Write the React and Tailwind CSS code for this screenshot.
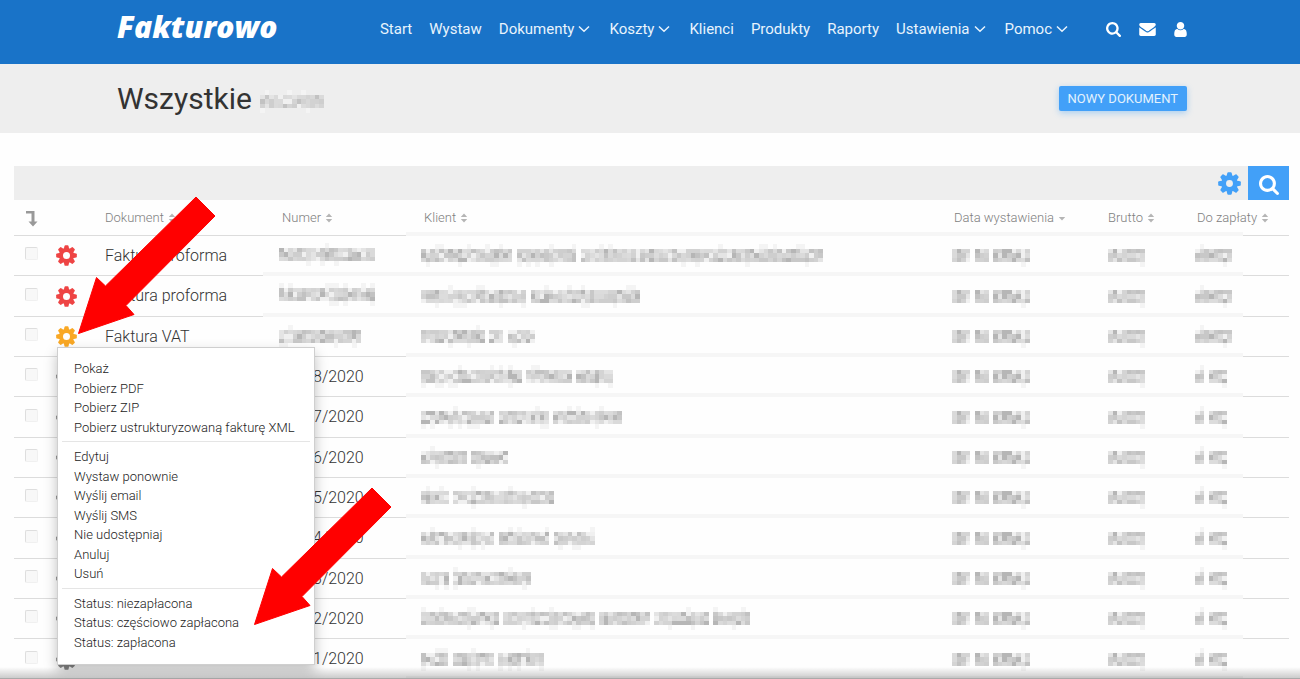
import React from "react";

const MOSAIC_SHADES = ["#dcdcdc", "#d2d2d2", "#c8c8c8", "#d8d8d8", "#b6b6b6", "#e4e4e4", "#cecece", "#d4d4d4", "#c2c2c2", "#f0f0f0", "#dadada"];
const CELL = 32 / 7;

function hash(a, b) {
  let h = (a * 374761393 + b * 668265263) | 0;
  h = Math.imul(h ^ (h >>> 13), 1274126177);
  return ((h ^ (h >>> 16)) >>> 0) >>> 5;
}

/* Censored text: one number per word, its length in mosaic cells. */
function Mosaic({ words, seed = 1 }) {
  const cells = [];
  let x = 0;
  words.forEach((len) => {
    for (let i = 0; i < len; i++, x++) {
      for (let r = 0; r < 5; r++) {
        const h = hash(x + seed * 131, r + 7);
        const outer = r === 0 || r === 4;
        if (outer && h % 7 !== 0) continue;
        const fill = outer ? "#f4f4f4" : MOSAIC_SHADES[h % MOSAIC_SHADES.length];
        cells.push(<rect key={x + "-" + r} x={x} y={r} width="1.02" height="1.02" fill={fill} />);
      }
    }
    x += 1;
  });
  const n = x - 1;
  return (
    <svg
      aria-hidden="true"
      className="block shrink-0"
      width={Math.round(n * CELL)}
      height="23"
      viewBox={`0 0 ${n} 5`}
      preserveAspectRatio="none"
      shapeRendering="crispEdges"
    >
      {cells}
    </svg>
  );
}

function Gear({ className, hole = 4 }) {
  return (
    <svg viewBox="-12 -12 24 24" className={className} fill="currentColor" aria-hidden="true">
      {[0, 45, 90, 135, 180, 225, 270, 315].map((a) => (
        <path key={a} transform={`rotate(${a})`} d="M-3.2 -7 L-2.3 -11 Q-2.1 -11.8 -1.3 -11.8 H1.3 Q2.1 -11.8 2.3 -11 L3.2 -7 Z" />
      ))}
      <path
        fillRule="evenodd"
        d={`M0 -8.600 A8.600 8.600 0 1 1 0 8.600 A8.600 8.600 0 1 1 0 -8.600 Z M0 ${-hole} A${hole} ${hole} 0 1 0 0 ${hole} A${hole} ${hole} 0 1 0 0 ${-hole} Z`}
      />
    </svg>
  );
}

function Chevron() {
  return (
    <svg viewBox="0 0 12 8" className="h-2 w-3" fill="none" stroke="currentColor" strokeWidth="1.5" aria-hidden="true">
      <path d="M1 1.5 L6 6.3 L11 1.5" />
    </svg>
  );
}

function SearchIcon({ className }) {
  return (
    <svg viewBox="64 128 1664 1664" className={className} fill="currentColor" aria-hidden="true">
      <path d="M1216 832q0-185-131.5-316.5t-316.5-131.5-316.5 131.5-131.5 316.5 131.5 316.5 316.5 131.5 316.5-131.5 131.5-316.5zm512 832q0 52-38 90t-90 38q-54 0-90-38l-343-342q-179 124-399 124-143 0-273.5-55.5t-225-150-150-225-55.5-273.5 55.5-273.5 150-225 225-150 273.5-55.5 273.5 55.5 225 150 150 225 55.5 273.5q0 220-124 399l343 343q37 37 37 90z" />
    </svg>
  );
}

function MailIcon() {
  return (
    <svg viewBox="0 256 1792 1408" className="h-[13px] w-[17px]" fill="currentColor" aria-hidden="true">
      <path d="M1792 710v794q0 66-47 113t-113 47h-1472q-66 0-113-47t-47-113v-794q44 49 101 87 362 246 497 345 57 42 92.5 65.5t94.5 48 110 24.5h2q51 0 110-24.5t94.5-48 92.5-65.5q170-123 498-345 57-39 100-87zm0-294q0 79-49 151t-122 123q-376 261-468 325-10 7-42.5 31t-54 38.5-52 32.5-57.5 27-50 9h-2q-23 0-50-9t-57.5-27-52-32.5-54-38.5-42.5-31q-91-64-262-182.5t-205-142.5q-62-42-117-115.5t-55-136.5q0-78 41.5-130t118.5-52h1472q65 0 112.5 47t47.5 113z" />
    </svg>
  );
}

function UserIcon() {
  return (
    <svg viewBox="256 128 1280 1536" className="h-[15px] w-[13px]" fill="currentColor" aria-hidden="true">
      <path d="M1536 1399q0 109-62.5 187t-150.5 78h-854q-88 0-150.5-78t-62.5-187q0-85 8.5-160.5t31.5-152 58.5-131 94-89 134.5-34.5q131 128 313 128t313-128q76 0 134.5 34.5t94 89 58.5 131 31.5 152 8.5 160.5zm-256-887q0 159-112.5 271.5t-271.5 112.5-271.5-112.5-112.5-271.5 112.5-271.5 271.5-112.5 271.5 112.5 112.5 271.5z" />
    </svg>
  );
}

function SortIcon({ down }) {
  return (
    <svg viewBox="0 0 8 10" className="h-[10px] w-2" fill="#b5b5b5" aria-hidden="true">
      {!down && <path d="M4 0.5 L7.2 4 H0.8 Z" />}
      {down ? <path d="M4 7.5 L7.2 4 H0.8 Z" /> : <path d="M4 9.5 L7.2 6 H0.8 Z" />}
    </svg>
  );
}

const NAV = [
  ["Start"],
  ["Wystaw"],
  ["Dokumenty", true],
  ["Koszty", true],
  ["Klienci"],
  ["Produkty"],
  ["Raporty"],
  ["Ustawienia", true],
  ["Pomoc", true],
];

const MENU = [
  ["Pokaż", "Pobierz PDF", "Pobierz ZIP", "Pobierz ustrukturyzowaną fakturę XML"],
  ["Edytuj", "Wystaw ponownie", "Wyślij email", "Wyślij SMS", "Nie udostępniaj", "Anuluj", "Usuń"],
  ["Status: niezapłacona", "Status: częściowo zapłacona", "Status: zapłacona"],
];

const RED = "text-[#ee4444]";
const ROWS = [
  { gear: RED, doc: "Faktura proforma", hidden: [21], client: [20, 13, 53], due: [8] },
  { gear: RED, doc: "Faktura proforma", hidden: [21], client: [23, 24], due: [8] },
  { gear: "text-[#f9a825]", doc: "Faktura VAT", hidden: [18], client: [14, 3, 6], due: [8], menu: true },
  { number: "8/2020", client: [22, 10, 8] },
  { number: "7/2020", client: [16, 11, 15] },
  { number: "6/2020", client: [10, 8] },
  { number: "5/2020", client: [6, 22] },
  { number: "4/2020", client: [16, 11, 9] },
  { number: "3/2020", client: [6, 17] },
  { number: "2/2020", client: [17, 20, 11, 12, 8] },
  { number: "1/2020", client: [6, 9, 10] },
];

const LINE = "border-b border-[#dcdcdc]";
const BAND = "border-b-4 border-[#f6f6f6]";

function HeadLabel({ children, down }) {
  return (
    <button type="button" className="flex items-center gap-1 whitespace-nowrap font-light">
      {children}
      <SortIcon down={down} />
    </button>
  );
}

function ContextMenu() {
  return (
    <div className="absolute left-[5px] top-[30px] z-10 w-[258px] border border-[#cfcfcf] bg-white px-1 pb-3 pt-[11px] text-[13px] font-light leading-normal text-[#222] shadow-[0_6px_12px_rgba(0,0,0,0.25)]">
      {MENU.map((group, g) => (
        <ul key={g} className={g ? "mt-1 border-t border-[#e5e5e5] pt-[5px]" : ""}>
          {group.map((item) => (
            <li key={item}>
              <a href="#" className="block whitespace-nowrap pl-3">
                {item}
              </a>
            </li>
          ))}
        </ul>
      ))}
    </div>
  );
}

function PointerArrow({ className }) {
  return (
    <svg viewBox="0 0 138 138" className={"pointer-events-none absolute z-20 h-[138px] w-[138px] " + className} aria-hidden="true">
      <path d="M118 1 L137 20 L48 109.500 L56 118.500 L0.500 137.500 L18.500 81.500 L27.500 90 Z" fill="#ff0000" stroke="#ff0000" strokeLinejoin="round" />
    </svg>
  );
}

export default function App() {
  return (
    <div className="relative h-screen overflow-hidden bg-[#fefefe] font-['Roboto',sans-serif] text-[#333]">
      <header className="flex h-16 items-center bg-[#1973c8] pb-1.5 pl-[117px] pr-[113px] text-white">
        <a href="#" className="pb-1 font-['Open_Sans',sans-serif] text-[30px] font-extrabold italic leading-8">
          Fakturowo
        </a>
        <nav className="ml-auto flex items-center gap-[17px] text-[15px] text-[#e8f3fd]">
          {NAV.map(([label, sub]) => (
            <a key={label} href="#" className={"flex items-center gap-1" + (sub ? " pr-[2px]" : "")}>
              {label}
              {sub && <Chevron />}
            </a>
          ))}
        </nav>
        <div className="ml-9 flex items-center gap-[18px]">
          <button type="button" aria-label="Szukaj">
            <SearchIcon className="h-[15px] w-[15px]" />
          </button>
          <a href="#" aria-label="Wiadomości">
            <MailIcon />
          </a>
          <a href="#" aria-label="Konto">
            <UserIcon />
          </a>
        </div>
      </header>

      <div className="flex h-[69px] items-center justify-between bg-[#eee] pl-[117px] pr-[113px]">
        <h1 className="flex items-end gap-2 text-[30px] leading-9">
          Wszystkie
          <span className="pb-1">
            <Mosaic words={[14]} seed={40} />
          </span>
        </h1>
        <button
          type="button"
          className="h-[25px] rounded-xs bg-[#42a0f8] px-[9px] text-[13px] text-[#e3f2fd] shadow-[0_2px_6px_rgba(66,160,248,0.4)]"
        >
          NOWY DOKUMENT
        </button>
      </div>

      <main className="pl-[14px] pr-[11px] pt-[33px]">
        <div className="flex h-[34px] items-center justify-end bg-[#eee]">
          <button type="button" aria-label="Ustawienia listy" className="mr-[7px] pt-px text-[#42a0f8]">
            <Gear className="h-[23px] w-[23px]" hole={3.6} />
          </button>
          <button type="button" aria-label="Szukaj na liście" className="flex h-full w-[41px] items-center justify-center bg-[#42a0f8] pt-1 text-white">
            <SearchIcon className="h-5 w-5" />
          </button>
        </div>

        <table className="w-full table-fixed border-separate border-spacing-0 text-left">
          <colgroup>
            <col className="w-[38px]" />
            <col className="w-[48px]" />
            <col className="w-[163px]" />
            <col className="w-[143px]" />
            <col />
            <col className="w-[154px]" />
            <col className="w-[89px]" />
            <col className="w-[51px]" />
            <col className="w-[46px]" />
          </colgroup>
          <thead className="text-[13px] text-[#808080]">
            <tr className="h-9">
              <th className={LINE}>
                <svg viewBox="0 0 12 16" className="ml-3 mt-[3px] h-4 w-3" fill="#999" aria-hidden="true">
                  <path d="M0 0 H8.500 V10.500 H11.500 L7 15.500 L2.500 10.500 H5.500 V2.500 H0 Z" />
                </svg>
              </th>
              <th className={LINE} />
              <th className={LINE + " pl-[5px]"}>
                <HeadLabel>Dokument</HeadLabel>
              </th>
              <th className={LINE + " pl-[19px]"}>
                <HeadLabel>Numer</HeadLabel>
              </th>
              <th className={BAND + " pl-[18px] pt-[3px]"}>
                <HeadLabel>Klient</HeadLabel>
              </th>
              <th className={BAND + " pl-[5px] pt-[3px]"}>
                <HeadLabel down>Data wystawienia</HeadLabel>
              </th>
              <th className={BAND + " pl-[5px] pt-[3px]"}>
                <HeadLabel>Brutto</HeadLabel>
              </th>
              <th className={BAND + " pl-[5px] pt-[3px]"}>
                <HeadLabel>Do zapłaty</HeadLabel>
              </th>
              <th className={LINE} />
            </tr>
          </thead>
          <tbody className="text-base font-light">
            {ROWS.map((row, i) => (
              <tr key={i} className="h-10 nth-[3n+2]:h-[41px]">
                <td className={LINE}>
                  <input
                    type="checkbox"
                    aria-label={"Zaznacz dokument " + (i + 1)}
                    className="mb-1 ml-[11px] block h-[13px] w-[13px] appearance-none rounded-[2px] border border-[#f0f0f0] border-l-[#dedede] border-t-[#dedede] bg-[#f8f8f8]"
                  />
                </td>
                <td className={LINE + " relative"}>
                  <button type="button" aria-label="Opcje" className={"ml-[4px] block " + (row.gear || "text-[#888]")}>
                    <Gear className="h-[21px] w-[21px]" />
                  </button>
                  {row.menu && <ContextMenu />}
                </td>
                <td className={LINE + " pl-[5px]"}>{row.doc}</td>
                {row.hidden ? (
                  <td className={(row.menu ? LINE : BAND) + " pl-4"}>
                    <Mosaic words={row.hidden} seed={i + 60} />
                  </td>
                ) : (
                  <td className={LINE + " pl-[50px]"}>{row.number}</td>
                )}
                <td className={BAND + " pl-[15px] pt-[3px]"}>
                  <Mosaic words={row.client} seed={i + 3} />
                </td>
                <td className={BAND + " pl-[3px] pt-[3px]"}>
                  <Mosaic words={[4, 3, 8]} seed={21} />
                </td>
                <td className={BAND + " pl-[5px] pt-[3px]"}>
                  <Mosaic words={[8]} seed={22} />
                </td>
                <td className={BAND + " pl-[3px] pt-[3px]"}>
                  <Mosaic words={row.due || [2, 4]} seed={23} />
                </td>
                <td className={LINE} />
              </tr>
            ))}
          </tbody>
        </table>
      </main>

      <PointerArrow className="left-[78px] top-[196px]" />
      <PointerArrow className="left-[254px] top-[487px]" />
      <div className="absolute inset-x-0 bottom-0 h-3 border-b border-[#aaa] bg-linear-to-b from-transparent to-black/20" />
    </div>
  );
}
